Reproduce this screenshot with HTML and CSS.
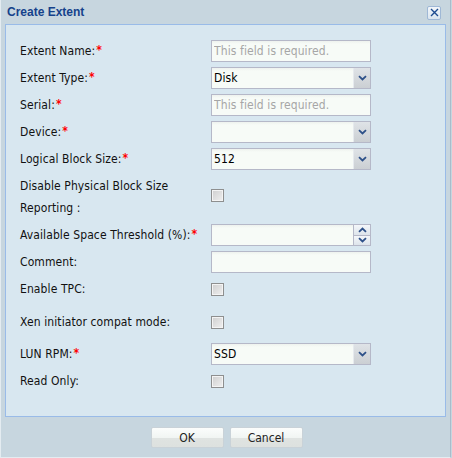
FILE: index.html
```html
<!DOCTYPE html>
<html>
<head>
<meta charset="utf-8">
<link rel="stylesheet" href="styles.css">
</head>
<body>
<div class="win">
  <div class="win-head">
    <span class="win-title">Create Extent</span>
    <span class="win-close"><svg width="9" height="9" viewBox="0 0 9 9"><path d="M1 1L8 8M8 1L1 8" stroke="#1d4b8f" stroke-width="1.4" fill="none"/></svg></span>
  </div>
  <div class="win-body">
    <div class="form">
      <div class="row">
        <label class="lbl">Extent Name:<span class="req">*</span></label>
        <div class="field"><input class="inp" type="text" placeholder="This field is required."></div>
      </div>
      <div class="row">
        <label class="lbl">Extent Type:<span class="req">*</span></label>
        <div class="field combo"><input class="inp" type="text" value="Disk"><span class="trig"><svg class="chev" width="9" height="6" viewBox="0 0 9 6"><path d="M1 1.2L4.5 4.5L8 1.2" stroke="#2e5189" stroke-width="1.8" fill="none"/></svg></span></div>
      </div>
      <div class="row">
        <label class="lbl">Serial:<span class="req">*</span></label>
        <div class="field"><input class="inp" type="text" placeholder="This field is required."></div>
      </div>
      <div class="row">
        <label class="lbl">Device:<span class="req">*</span></label>
        <div class="field combo"><input class="inp" type="text" value=""><span class="trig"><svg class="chev" width="9" height="6" viewBox="0 0 9 6"><path d="M1 1.2L4.5 4.5L8 1.2" stroke="#2e5189" stroke-width="1.8" fill="none"/></svg></span></div>
      </div>
      <div class="row">
        <label class="lbl">Logical Block Size:<span class="req">*</span></label>
        <div class="field combo"><input class="inp" type="text" value="512"><span class="trig"><svg class="chev" width="9" height="6" viewBox="0 0 9 6"><path d="M1 1.2L4.5 4.5L8 1.2" stroke="#2e5189" stroke-width="1.8" fill="none"/></svg></span></div>
      </div>
      <div class="row row-tall">
        <label class="lbl lbl-multi">Disable Physical Block Size<br>Reporting :</label>
        <span class="chk chk-top"></span>
      </div>
      <div class="row">
        <label class="lbl">Available Space Threshold (%):<span class="req">*</span></label>
        <div class="field combo"><input class="inp" type="text" value=""><span class="trig spin"><span class="spin-half"><svg width="9" height="6" viewBox="0 0 9 6"><path d="M1 4.8L4.5 1.5L8 4.8" stroke="#2e5189" stroke-width="1.8" fill="none"/></svg></span><span class="spin-half"><svg width="9" height="6" viewBox="0 0 9 6"><path d="M1 1.2L4.5 4.5L8 1.2" stroke="#2e5189" stroke-width="1.8" fill="none"/></svg></span></span></div>
      </div>
      <div class="row">
        <label class="lbl">Comment:</label>
        <div class="field"><input class="inp" type="text" value=""></div>
      </div>
      <div class="row row-chk">
        <label class="lbl">Enable TPC:</label>
        <span class="chk"></span>
      </div>
      <div class="row row-chk row-gap10">
        <label class="lbl">Xen initiator compat mode:</label>
        <span class="chk"></span>
      </div>
      <div class="row row-gap9">
        <label class="lbl">LUN RPM:<span class="req">*</span></label>
        <div class="field combo"><input class="inp" type="text" value="SSD"><span class="trig"><svg class="chev" width="9" height="6" viewBox="0 0 9 6"><path d="M1 1.2L4.5 4.5L8 1.2" stroke="#2e5189" stroke-width="1.8" fill="none"/></svg></span></div>
      </div>
      <div class="row row-chk">
        <label class="lbl">Read Only:</label>
        <span class="chk"></span>
      </div>
    </div>
  </div>
  <div class="win-foot">
    <button class="btn">OK</button>
    <button class="btn">Cancel</button>
  </div>
</div>
</body>
</html>
```

FILE: styles.css
```css
html, body {
  margin: 0;
  padding: 0;
  background: #c7d6df;
}
.win {
  box-sizing: border-box;
  width: 451px;
  height: 458px;
  background: #c7d6df;
  border-left: 1px solid #e4ecf1;
  border-right: 1px solid #a9bccb;
  border-bottom: 1px solid #e4ecf1;
  padding: 0 4px 0 4px;
  font-family: "DejaVu Sans Condensed", "DejaVu Sans", Verdana, sans-serif;
  font-stretch: condensed;
  font-size: 12px;
  color: #111;
}
.win-head {
  height: 24px;
  display: flex;
  align-items: center;
  justify-content: space-between;
  padding-left: 2px;
}
.win-title {
  font-family: "Liberation Sans", Arial, sans-serif;
  font-stretch: normal;
  font-weight: bold;
  font-size: 12px;
  color: #15428b;
  margin-top: -1px;
}
.win-close {
  box-sizing: border-box;
  width: 14px;
  height: 14px;
  border: 1px solid #9fb8d6;
  border-radius: 2px;
  background: linear-gradient(#f2f6fa, #dbe6ef);
  display: flex;
  align-items: center;
  justify-content: center;
  margin-right: 5px;
  margin-top: 1px;
}
.win-body {
  box-sizing: border-box;
  height: 393px;
  background: #d8e7f0;
  border: 1px solid #99bbe8;
  padding: 15px 0 0 14px;
}
.form {
  display: flex;
  flex-direction: column;
  gap: 5px;
}
.row {
  display: flex;
  align-items: center;
  height: 22px;
}
.row-tall {
  height: 44px;
  align-items: flex-start;
}
.row-chk {
  height: 23px;
}
.row-gap10 {
  margin-top: 5px;
}
.row-gap9 {
  margin-top: 4px;
}
.lbl {
  width: 191px;
  flex: none;
  white-space: nowrap;
  line-height: 15px;
  letter-spacing: 0.1px;
}
.lbl-multi {
  line-height: 22px;
}
.req {
  color: #f00;
  font-weight: bold;
  font-size: 12px;
  margin-left: 1px;
  position: relative;
  top: -1px;
}
.field {
  box-sizing: border-box;
  width: 160px;
  height: 22px;
  border: 1px solid #b5b8c8;
  background: linear-gradient(#eef2ee 0, #f7fbf7 3px, #f7fbf7 100%);
  display: flex;
}
.inp {
  flex: 1;
  min-width: 0;
  border: 0;
  outline: 0;
  background: transparent;
  font-family: "DejaVu Sans Condensed", "DejaVu Sans", Verdana, sans-serif;
  font-stretch: condensed;
  font-size: 12px;
  letter-spacing: 0.1px;
  color: #000;
  padding: 0 2px;
  margin: 0;
  height: 20px;
}
.inp::placeholder {
  color: #a6a6a6;
}
.trig {
  box-sizing: border-box;
  width: 17px;
  flex: none;
  height: 20px;
  border-left: 1px solid #e6eaee;
  background: linear-gradient(#dfe3e7, #cbcfd3);
  display: flex;
  align-items: center;
  justify-content: center;
}
.spin {
  flex-direction: column;
  background: #d8e0e8;
  border-left: 1px solid #b5b8c8;
}
.spin-half {
  flex: 1;
  width: 100%;
  display: flex;
  align-items: center;
  justify-content: center;
  background: linear-gradient(#f4f7fa, #dde4eb);
}
.spin-half + .spin-half {
  border-top: 1px solid #b5b8c8;
}
.chk {
  box-sizing: border-box;
  width: 13px;
  height: 13px;
  border: 1px solid #8e8f8f;
  box-shadow: inset 0 0 0 1px #f4f4f4;
  background: linear-gradient(135deg, #cfcfcf, #f0f0f0);
  flex: none;
}
.chk-top {
  margin-top: 14px;
}
.win-foot {
  display: flex;
  justify-content: center;
  gap: 6px;
  padding-top: 10px;
  padding-left: 2px;
}
.btn {
  box-sizing: border-box;
  width: 73px;
  height: 21px;
  border: 1px solid #c9d2d8;
  border-radius: 2px;
  background: linear-gradient(#fbfdfc 0, #f1f5f3 50%, #dfe3e1 55%, #dde1df 100%);
  font-family: "DejaVu Sans Condensed", "DejaVu Sans", Verdana, sans-serif;
  font-stretch: condensed;
  font-size: 12px;
  color: #222;
  padding: 0;
}
```
